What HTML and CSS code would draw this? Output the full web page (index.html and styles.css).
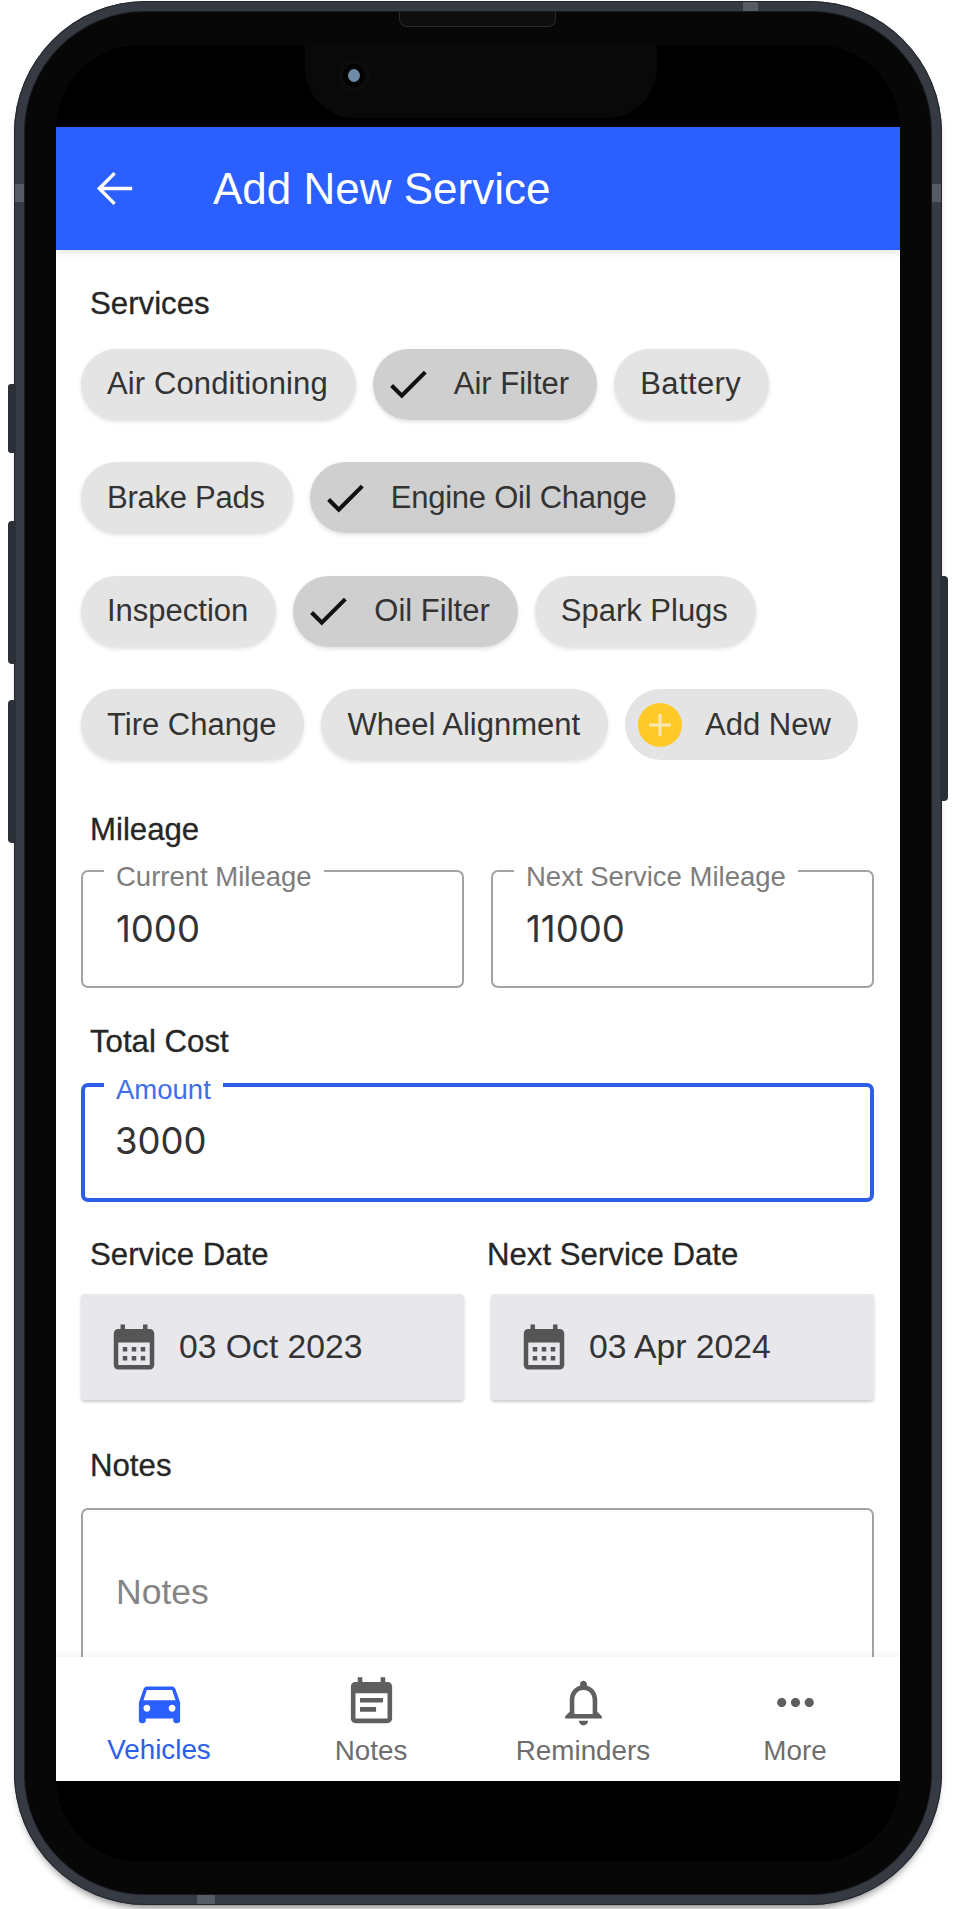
FILE: index.html
```html
<!DOCTYPE html>
<html lang="en">
<head>
    <meta charset="UTF-8">
    <title>Add New Service</title>
    <link rel="stylesheet" href="styles.css">
</head>
<body>
    <div class="phone">
        <span class="side-btn btn-silent"></span>
        <span class="side-btn btn-up"></span>
        <span class="side-btn btn-down"></span>
        <span class="side-btn btn-power"></span>
        <span class="antenna ant-left"></span>
        <span class="antenna ant-right"></span>
        <span class="antenna ant-top"></span>
        <span class="antenna ant-bottom"></span>
        <div class="bezel">
            <span class="speaker"></span>
            <div class="display">
                <div class="notch"><span class="camera"></span></div>
                <div class="screen">
                    <header class="app-bar">
                        <svg class="back-icon" viewBox="0 0 24 24"><path d="M20 11.2H7l5.6-5.6L11.5 4.5 4 12l7.5 7.5 1.1-1.1L7 12.8h13z"/></svg>
                        <h1>Add New Service</h1>
                    </header>
                    <main class="form">
                        <h2 class="section-title">Services</h2>
                        <div class="chips">
                            <div class="chip-row">
                                <span class="chip roomy">Air Conditioning</span>
                                <span class="chip selected"><svg class="check" viewBox="0 0 24 24"><path d="M9 16.17L4.83 12l-1.42 1.41L9 19 21 7l-1.41-1.41z"/></svg>Air Filter</span>
                                <span class="chip wide">Battery</span>
                            </div>
                            <div class="chip-row">
                                <span class="chip tight">Brake Pads</span>
                                <span class="chip selected tight"><svg class="check" viewBox="0 0 24 24"><path d="M9 16.17L4.83 12l-1.42 1.41L9 19 21 7l-1.41-1.41z"/></svg>Engine Oil Change</span>
                            </div>
                            <div class="chip-row">
                                <span class="chip">Inspection</span>
                                <span class="chip selected"><svg class="check" viewBox="0 0 24 24"><path d="M9 16.17L4.83 12l-1.42 1.41L9 19 21 7l-1.41-1.41z"/></svg>Oil Filter</span>
                                <span class="chip">Spark Plugs</span>
                            </div>
                            <div class="chip-row">
                                <span class="chip">Tire Change</span>
                                <span class="chip">Wheel Alignment</span>
                                <span class="chip add-chip"><span class="plus"><svg viewBox="0 0 44 44"><path d="M22 11v22M11 22h22"/></svg></span>Add New</span>
                            </div>
                        </div>

                        <h2 class="section-title mileage-title">Mileage</h2>
                        <div class="two-col">
                            <div class="field"><label>Current Mileage</label><div class="value">1000</div></div>
                            <div class="field"><label>Next Service Mileage</label><div class="value">11000</div></div>
                        </div>

                        <h2 class="section-title cost-title">Total Cost</h2>
                        <div class="field focused"><label>Amount</label><div class="value">3000</div></div>

                        <div class="two-col date-titles">
                            <h2 class="section-title">Service Date</h2>
                            <h2 class="section-title next-date">Next Service Date</h2>
                        </div>
                        <div class="two-col">
                            <div class="date-card">
                                <svg class="cal-icon" viewBox="0 0 24 24"><path d="M19 4h-1V2h-2v2H8V2H6v2H5c-1.11 0-1.99.9-1.99 2L3 20c0 1.1.89 2 2 2h14c1.1 0 2-.9 2-2V6c0-1.1-.9-2-2-2zm0 16H5V10h14v10zM9 14H7v-2h2v2zm4 0h-2v-2h2v2zm4 0h-2v-2h2v2zm-8 4H7v-2h2v2zm4 0h-2v-2h2v2zm4 0h-2v-2h2v2z"/></svg>
                                <span>03 Oct 2023</span>
                            </div>
                            <div class="date-card">
                                <svg class="cal-icon" viewBox="0 0 24 24"><path d="M19 4h-1V2h-2v2H8V2H6v2H5c-1.11 0-1.99.9-1.99 2L3 20c0 1.1.89 2 2 2h14c1.1 0 2-.9 2-2V6c0-1.1-.9-2-2-2zm0 16H5V10h14v10zM9 14H7v-2h2v2zm4 0h-2v-2h2v2zm4 0h-2v-2h2v2zm-8 4H7v-2h2v2zm4 0h-2v-2h2v2zm4 0h-2v-2h2v2z"/></svg>
                                <span>03 Apr 2024</span>
                            </div>
                        </div>

                        <h2 class="section-title notes-title">Notes</h2>
                        <div class="notes-box">Notes</div>
                    </main>
                    <nav class="tab-bar">
                        <div class="tab active">
                            <svg viewBox="0 0 24 24"><path d="M18.92 6.01C18.72 5.42 18.16 5 17.5 5h-11c-.66 0-1.21.42-1.42 1.01L3 12v8c0 .55.45 1 1 1h1c.55 0 1-.45 1-1v-1h12v1c0 .55.45 1 1 1h1c.55 0 1-.45 1-1v-8l-2.08-5.99zM6.5 16c-.83 0-1.5-.67-1.5-1.5S5.67 13 6.5 13s1.5.67 1.5 1.5S7.33 16 6.5 16zm11 0c-.83 0-1.5-.67-1.5-1.5s.67-1.5 1.5-1.5 1.5.67 1.5 1.5-.67 1.5-1.5 1.5zM5 11l1.5-4.5h11L19 11H5z"/></svg>
                            <span>Vehicles</span>
                        </div>
                        <div class="tab">
                            <svg viewBox="0 0 24 24"><path d="M17 10H7v2h10v-2zm2-7h-1V1h-2v2H8V1H6v2H5c-1.11 0-1.99.9-1.99 2L3 19c0 1.1.89 2 2 2h14c1.1 0 2-.9 2-2V5c0-1.1-.9-2-2-2zm0 16H5V8h14v11zm-5-5H7v2h7v-2z"/></svg>
                            <span>Notes</span>
                        </div>
                        <div class="tab">
                            <svg viewBox="0 0 24 24"><path d="M12 22c1.1 0 2-.9 2-2h-4c0 1.1.9 2 2 2zm6-6v-5c0-3.07-1.63-5.64-4.5-6.32V4c0-.83-.67-1.5-1.5-1.5s-1.5.67-1.5 1.5v.68C7.64 5.36 6 7.92 6 11v5l-2 2v1h16v-1l-2-2zm-2 1H8v-6c0-2.48 1.51-4.5 4-4.5s4 2.02 4 4.5v6z"/></svg>
                            <span>Reminders</span>
                        </div>
                        <div class="tab">
                            <svg viewBox="0 0 24 24"><path d="M6 10c-1.1 0-2 .9-2 2s.9 2 2 2 2-.9 2-2-.9-2-2-2zm12 0c-1.1 0-2 .9-2 2s.9 2 2 2 2-.9 2-2-.9-2-2-2zm-6 0c-1.1 0-2 .9-2 2s.9 2 2 2 2-.9 2-2-.9-2-2-2z"/></svg>
                            <span>More</span>
                        </div>
                    </nav>
                </div>
            </div>
        </div>
    </div>
</body>
</html>
```

FILE: styles.css
```css
html, body {
    margin: 0;
    padding: 0;
    height: 1909px;
    overflow: hidden;
    background: #fff;
}
body {
    font-family: "Liberation Sans", Arial, sans-serif;
    color: #333;
}

/* phone frame */
.phone {
    position: relative;
    box-sizing: border-box;
    width: 928px;
    height: 1904px;
    margin: 1px 0 0 14px;
    padding: 11px;
    border-radius: 132px;
    background: #353a43;
    box-shadow: 0 7px 8px -5px rgba(0, 0, 0, 0.55), inset 0 0 0 1px #23262c;
}
.side-btn {
    position: absolute;
    width: 8px;
    background: #2b2f37;
}
.btn-silent {
    left: -6px;
    top: 383px;
    height: 69px;
    border-radius: 3px 0 0 3px;
}
.btn-up {
    left: -6px;
    top: 520px;
    height: 143px;
    border-radius: 4px 0 0 4px;
}
.btn-down {
    left: -6px;
    top: 699px;
    height: 143px;
    border-radius: 4px 0 0 4px;
}
.btn-power {
    right: -6px;
    top: 575px;
    height: 225px;
    border-radius: 0 4px 4px 0;
}
.antenna {
    position: absolute;
    background: #565b64;
}
.ant-left {
    left: 1px;
    top: 183px;
    width: 9px;
    height: 18px;
}
.ant-right {
    right: 1px;
    top: 183px;
    width: 9px;
    height: 18px;
}
.ant-top {
    left: 729px;
    top: 1px;
    width: 15px;
    height: 9px;
}
.ant-bottom {
    left: 183px;
    bottom: 1px;
    width: 18px;
    height: 9px;
}
.bezel {
    position: relative;
    box-sizing: border-box;
    height: 100%;
    padding: 33px 31px 32px;
    border-radius: 120px;
    background: #070707;
    box-shadow: 0 0 0 1px #1a1c20;
}
.speaker {
    position: absolute;
    left: 374px;
    top: 0;
    width: 155px;
    height: 14px;
    border: 1px solid #2a2c30;
    border-top: none;
    border-radius: 0 0 8px 8px;
    background: #0e0e0f;
}
.display {
    position: relative;
    box-sizing: border-box;
    height: 100%;
    padding: 82px 0 81px;
    border-radius: 84px;
    background: #000;
}
.notch {
    position: absolute;
    left: 249px;
    top: 0;
    width: 352px;
    height: 73px;
    border-radius: 0 0 50px 50px;
    background: #090909;
}
.camera {
    position: absolute;
    left: 38px;
    top: 19px;
    width: 12px;
    height: 13px;
    border: 5px solid #030303;
    border-radius: 50%;
    background: #6d8aa6;
    box-shadow: 0 0 0 5px #0c0c0d;
}

/* app screen */
.screen {
    display: flex;
    flex-direction: column;
    height: 100%;
    overflow: hidden;
    background: #fff;
}
.app-bar {
    display: flex;
    flex: none;
    align-items: center;
    height: 123px;
    padding-left: 32px;
    background: #2b5fff;
    box-shadow: 0 2px 8px rgba(0, 0, 0, 0.12);
    position: relative;
    z-index: 1;
}
.back-icon {
    width: 53px;
    height: 53px;
    margin-right: 72px;
    fill: #fff;
}
.app-bar h1 {
    margin: 0;
    font-size: 44px;
    font-weight: normal;
    color: #fff;
}
.form {
    flex: 1;
    min-height: 0;
    padding: 37px 26px 0 25px;
    overflow: hidden;
}
.section-title {
    margin: 0;
    padding-left: 9px;
    font-size: 31.2px;
    line-height: 34px;
    font-weight: normal;
    color: #262626;
    -webkit-text-stroke: 0.3px #262626;
}

/* chips */
.chips {
    margin-top: 27.5px;
}
.chip-row {
    display: flex;
    gap: 17px;
    margin-bottom: 42.5px;
}
.chip {
    display: flex;
    align-items: center;
    height: 71px;
    padding: 0 28px 0 26px;
    border-radius: 36px;
    background: #e4e4e4;
    font-size: 31px;
    white-space: nowrap;
    box-shadow: 0 2px 4px rgba(0, 0, 0, 0.12);
}
.chip.tight {
    letter-spacing: -0.25px;
}
.chip.roomy {
    letter-spacing: 0.12px;
}
.chip.wide {
    letter-spacing: 0.4px;
}
.chip.selected {
    padding-left: 10px;
    background: #cfcfcf;
}
.check {
    width: 50px;
    height: 50px;
    margin-right: 21px;
    fill: #111;
}
.add-chip {
    padding: 0 27px 0 13px;
    box-shadow: none;
}
.plus {
    display: flex;
    width: 44px;
    height: 44px;
    margin-right: 23px;
    border-radius: 50%;
    background: #ffca28;
}
.plus svg {
    width: 44px;
    height: 44px;
    fill: none;
    stroke: #f6e7b4;
    stroke-width: 3;
}

/* outlined fields */
.mileage-title {
    margin-top: 52.5px;
}
.two-col {
    display: grid;
    grid-template-columns: 383px 383px;
    column-gap: 27px;
}
.field {
    position: relative;
    box-sizing: border-box;
    height: 118px;
    padding: 37px 33px 0;
    border: 2px solid #a3a3a3;
    border-radius: 7px;
    background: #fff;
}
.mileage-title + .two-col {
    margin-top: 23px;
}
.field label {
    position: absolute;
    left: 21px;
    top: -10px;
    padding: 0 12px;
    background: #fff;
    font-size: 27.5px;
    line-height: 30px;
    color: #7d7d7d;
}
.value {
    font-family: Inter, "Liberation Sans", sans-serif;
    font-size: 36.5px;
    line-height: 40px;
    color: #333;
}
.cost-title {
    margin-top: 37px;
}
.field.focused {
    height: 119px;
    margin-top: 24px;
    padding: 34px 30px 0;
    border: 4px solid #2c5fe6;
}
.field.focused label {
    left: 19px;
    top: -12px;
    color: #3f6fe8;
}
.date-titles {
    margin-top: 36px;
    margin-bottom: 22px;
}
.next-date {
    margin-left: -4px;
    padding-left: 0;
    white-space: nowrap;
}
.date-card {
    display: flex;
    align-items: center;
    height: 106px;
    padding-left: 26px;
    border-radius: 4px;
    background: #e8e8ec;
    font-size: 33.7px;
    box-shadow: 0 2px 3px rgba(0, 0, 0, 0.2);
}
.cal-icon {
    width: 54px;
    height: 54px;
    margin-right: 18px;
    fill: #555;
}
.notes-title {
    margin-top: 49px;
}
.notes-box {
    box-sizing: border-box;
    height: 220px;
    margin-top: 25px;
    padding: 62px 33px 0;
    border: 2px solid #a3a3a3;
    border-radius: 7px;
    font-size: 35.5px;
    line-height: 40px;
    color: #858585;
}

/* bottom tabs */
.tab-bar {
    display: grid;
    flex: none;
    grid-template-columns: repeat(4, 212px);
    height: 124px;
    margin-left: -3px;
    background: #fff;
    box-shadow: 0 -2px 6px rgba(0, 0, 0, 0.06);
    position: relative;
}
.tab {
    display: flex;
    flex-direction: column;
    align-items: center;
    padding-top: 18px;
    font-size: 27.8px;
    line-height: 30px;
    color: #6e6e6e;
}
.tab svg {
    width: 55px;
    height: 55px;
    margin-bottom: 6px;
    fill: #5f5f5f;
}
.tab.active {
    color: #2b5fe8;
}
.tab.active svg {
    margin-bottom: 5px;
    fill: #2b5fff;
}
```
